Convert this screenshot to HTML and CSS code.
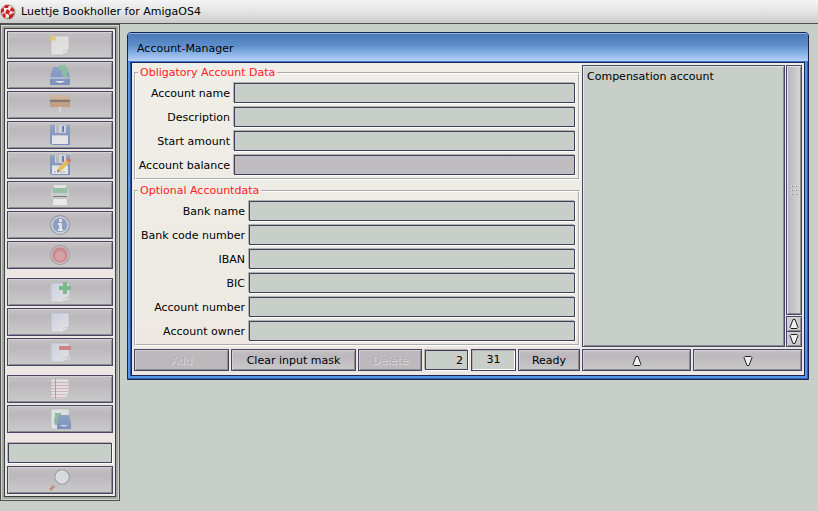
FILE: index.html
```html
<!DOCTYPE html>
<html lang="en">
<head>
    <meta charset="UTF-8">
    <meta name="viewport" content="width=device-width, initial-scale=1.0">
    <title>Luettje Bookholler for AmigaOS4</title>
    <link rel="stylesheet" href="styles.css">
</head>
<body>
    <!-- shared gradients and shapes for the toolbar icons -->
    <svg class="defs" aria-hidden="true">
        <defs>
            <linearGradient id="blue" x1="0" y1="0" x2="0" y2="1">
                <stop offset="0" stop-color="#7c98c8"/>
                <stop offset="1" stop-color="#5f7ab8"/>
            </linearGradient>
            <linearGradient id="paper" x1="0" y1="0" x2="1" y2="1">
                <stop offset="0" stop-color="#d2daec"/>
                <stop offset="1" stop-color="#f0f0f4"/>
            </linearGradient>
            <symbol id="sheet" viewBox="0 0 22 22">
                <path d="M2 2h18v14l-5 5H2z" fill="url(#paper)" stroke="#b4b4be" stroke-width=".7"/>
                <path d="M15 21v-4l5-1z" fill="#fff" stroke="#a8a8b0" stroke-width=".6"/>
            </symbol>
            <symbol id="floppy" viewBox="0 0 22 22">
                <path d="M1 1h20v20H3l-2-2z" fill="url(#blue)"/>
                <path d="M6 1h11v8H6z" fill="#dadde2"/>
                <path d="M13 2h2v6h-2z" fill="#4867a5"/>
                <path d="M7 1h3v8H7z" fill="#b9bdc4"/>
                <path d="M3 11h16v9H3z" fill="#f4f4f4"/>
                <path d="M3 11h16v1H3z" fill="#c8ccd4"/>
            </symbol>
        </defs>
    </svg>

    <header class="screen-bar">
        <svg class="ball" viewBox="0 0 16 16" aria-hidden="true">
            <circle cx="8" cy="8" r="7" fill="#f6eeee" stroke="#a08080"/>
            <path d="M5 1l4 0-1 3-4 0zM11 3l3 2 0 3-4-1zM1 5l3-1 0 4-3 1zM7 5l3 2-1 4-4-2zM2 10l3-1 1 4-2 1zM9 11l4-2 1 1-2 4-3 1z" fill="#cc2222"/>
            <path d="M14 8a6 6 0 0 1-7 6" fill="none" stroke="#701818" stroke-opacity=".5"/>
        </svg>
        <h1>Luettje Bookholler for AmigaOS4</h1>
    </header>

    <div class="desktop">
        <nav class="toolbar" aria-label="Tools">
            <div class="group">
                <button type="button" class="tool" aria-label="New">
                    <svg viewBox="0 0 22 22">
                        <path d="M2 2h18v14l-5 5H2z" fill="#eeeeec" stroke="#b8b8b8" stroke-width=".7"/>
                        <path d="M15 21v-4l5-1z" fill="#fff" stroke="#a8a8a8" stroke-width=".6"/>
                        <path d="M3 0l1 3 4-1-2 2 2 3-4-1-2 3-1-4-1-1 2-1-1-2 2 1z" fill="#f0cf60"/>
                    </svg>
                </button>
                <button type="button" class="tool" aria-label="Open">
                    <svg viewBox="0 0 22 22">
                        <path d="M4 3h14l3 10v8H1v-8z" fill="url(#blue)"/>
                        <path d="M1 13h20v2H1z" fill="#a4b6dc"/>
                        <path d="M6 17q5 4 10 0z" fill="#eef2f8"/>
                        <path d="M10 1h6l3 4-1 5 1 4-4-1-3-4q3-2-2-3z" fill="#79bf93"/>
                    </svg>
                </button>
                <button type="button" class="tool" aria-label="Drawer">
                    <svg viewBox="0 0 22 22">
                        <path d="M2 1h18l1 7v5H1V8z" fill="#c49470"/>
                        <path d="M2 1h18v4H2z" fill="#d2b090"/>
                        <path d="M1 6h20v2H1z" fill="#705e54"/>
                        <path d="M9 13h4l-2 2z" fill="#f1e3d8"/>
                        <path d="M11 14v4" stroke="#dcdcdc" stroke-width="2"/>
                    </svg>
                </button>
                <button type="button" class="tool" aria-label="Save">
                    <svg viewBox="0 0 22 22"><use href="#floppy"/></svg>
                </button>
                <button type="button" class="tool" aria-label="Save as">
                    <svg viewBox="0 0 22 22">
                        <use href="#floppy"/>
                        <path d="M5 18h12" stroke="#8a8a8a" stroke-dasharray="2 1"/>
                        <path d="M8 18l2-5 8-8 3 3-8 8z" fill="#f4bc38"/>
                        <path d="M17 6l2-2q3 0 3 3l-2 2z" fill="#cf6458"/>
                        <path d="M8 18l1-3 2 2z" fill="#6a5040"/>
                    </svg>
                </button>
                <button type="button" class="tool" aria-label="Print">
                    <svg viewBox="0 0 22 22">
                        <path d="M5 1h12v4H5z" fill="#f2f2f2"/>
                        <path d="M2 6l3-2h12l3 2v8H2z" fill="#cfd2d2"/>
                        <path d="M4 4h14v5H4z" fill="#84c49c"/>
                        <path d="M4 12h14v1H4z" fill="#555"/>
                        <path d="M1 15h20v3H1z" fill="#bfc1c1"/>
                        <path d="M4 15h14v6H4z" fill="#fafafa"/>
                    </svg>
                </button>
                <button type="button" class="tool" aria-label="Info">
                    <svg viewBox="0 0 22 22">
                        <circle cx="11" cy="11" r="9" fill="#7892c6" stroke="#868ba0" stroke-width="2"/>
                        <circle cx="11" cy="11" r="8" fill="none" stroke="#dadfe9" stroke-width="1.4"/>
                        <path d="M10 5h3v3h-3zM9 9h4v6h1v2H9v-2h1v-4H9z" fill="#f2f2f6"/>
                    </svg>
                </button>
                <button type="button" class="tool" aria-label="Quit">
                    <svg viewBox="0 0 22 22">
                        <circle cx="11" cy="11" r="9" fill="#d0747c" stroke="#94898c" stroke-width="2"/>
                        <circle cx="11" cy="11" r="8.4" fill="none" stroke="#e4d6d6"/>
                        <circle cx="11" cy="12" r="5" fill="#dd969a"/>
                    </svg>
                </button>
            </div>

            <div class="group">
                <button type="button" class="tool" aria-label="Add entry">
                    <svg viewBox="0 0 22 22">
                        <path d="M1 5l1 15 5 1 14-2V8z" fill="#dcdce2"/>
                        <use href="#sheet"/>
                        <path d="M14 1h4v4h4v4h-4v4h-4V9h-4V5h4z" fill="#5db878"/>
                    </svg>
                </button>
                <button type="button" class="tool" aria-label="Edit entry">
                    <svg viewBox="0 0 22 22"><use href="#sheet"/></svg>
                </button>
                <button type="button" class="tool" aria-label="Remove entry">
                    <svg viewBox="0 0 22 22">
                        <path d="M1 5l1 15 5 1 14-2V8z" fill="#dcdce2"/>
                        <use href="#sheet"/>
                        <path d="M10 5h12v4H10z" fill="#d07070"/>
                    </svg>
                </button>
            </div>

            <div class="group">
                <button type="button" class="tool" aria-label="Journal">
                    <svg viewBox="0 0 22 22">
                        <path d="M2 1h18v15l-5 5H2z" fill="#f1eeee" stroke="#b8b8b8" stroke-width=".7"/>
                        <path d="M2 4.500h18M2 7.500h18M2 10.500h18M2 13.500h18M2 16.500h13M2 19.500h12" stroke="#dcb0b4"/>
                        <path d="M6.500 1v20" stroke="#9a90b8"/>
                        <path d="M15 21v-4l5-1z" fill="#fff" stroke="#a8a8a8" stroke-width=".6"/>
                    </svg>
                </button>
                <button type="button" class="tool" aria-label="Export">
                    <svg viewBox="0 0 22 22">
                        <path d="M2 1h18v20H2z" fill="#eeeef0" stroke="#b8b8b8" stroke-width=".7"/>
                        <path d="M6 5h6v6l-2-1q-2 3 0 7H6q-2-5 0-8z" fill="#74bd8c"/>
                        <path d="M10 7h10l2 8v6H8v-6z" fill="url(#blue)"/>
                        <path d="M11 17q4 3 8 0z" fill="#d8e2f4"/>
                    </svg>
                </button>
            </div>

            <div class="group search">
                <input type="text" class="field" aria-label="Search text">
                <button type="button" class="tool" aria-label="Search">
                    <svg viewBox="0 0 22 22">
                        <path d="M1 21l5-5" stroke="#c07858" stroke-width="3"/>
                        <path d="M5 17l3-3" stroke="#ccc" stroke-width="2"/>
                        <circle cx="13" cy="8" r="7" fill="#e3e8e8" stroke="#929696" stroke-width="1.500"/>
                        <circle cx="13" cy="8" r="6" fill="none" stroke="#fafafa"/>
                    </svg>
                </button>
            </div>
        </nav>

        <main class="workspace">
            <section class="window" aria-labelledby="window-title">
                <h2 class="window-title" id="window-title">Account-Manager</h2>
                <div class="client">
                    <form class="account-form">
                        <fieldset class="obligatory">
                            <legend>Obligatory Account Data</legend>
                            <label for="name">Account name</label>
                            <input type="text" class="field" id="name">
                            <label for="description">Description</label>
                            <input type="text" class="field" id="description">
                            <label for="start">Start amount</label>
                            <input type="text" class="field" id="start">
                            <label for="balance">Account balance</label>
                            <input type="text" class="field" id="balance" readonly>
                        </fieldset>
                        <fieldset class="optional">
                            <legend>Optional Accountdata</legend>
                            <label for="bank">Bank name</label>
                            <input type="text" class="field" id="bank">
                            <label for="bank-code">Bank code number</label>
                            <input type="text" class="field" id="bank-code">
                            <label for="iban">IBAN</label>
                            <input type="text" class="field" id="iban">
                            <label for="bic">BIC</label>
                            <input type="text" class="field" id="bic">
                            <label for="number">Account number</label>
                            <input type="text" class="field" id="number">
                            <label for="owner">Account owner</label>
                            <input type="text" class="field" id="owner">
                        </fieldset>
                    </form>

                    <div class="accounts">
                        <ul class="account-list">
                            <li>Compensation account</li>
                        </ul>
                        <div class="scroller">
                            <div class="knob">
                                <svg viewBox="0 0 6 10" aria-hidden="true">
                                    <path d="M1 1h1v1H1zM5 1h1v1H5zM1 5h1v1H1zM5 5h1v1H5zM1 9h1v1H1zM5 9h1v1H5z" fill="#888"/>
                                    <path d="M0 0h1v1H0zM4 0h1v1H4zM0 4h1v1H0zM4 4h1v1H4zM0 8h1v1H0zM4 8h1v1H4z" fill="#eee"/>
                                </svg>
                            </div>
                            <button type="button" class="arrow" aria-label="Scroll up">
                                <svg viewBox="0 0 12 12"><path d="M5 1.500h2l3 8-1 1H3l-1-1z"/></svg>
                            </button>
                            <button type="button" class="arrow" aria-label="Scroll down">
                                <svg viewBox="0 0 12 12"><path d="M3 1.500h6l1 1-3 8H5l-3-8z"/></svg>
                            </button>
                        </div>
                    </div>

                    <div class="actions">
                        <button type="button" class="btn add" disabled>Add</button>
                        <button type="button" class="btn clear">Clear input mask</button>
                        <button type="button" class="btn delete" disabled>Delete</button>
                        <input type="text" class="field position" value="2" aria-label="Position">
                        <output class="total">31</output>
                        <button type="button" class="btn ready">Ready</button>
                    </div>

                    <div class="move">
                        <button type="button" class="btn" aria-label="Move up">
                            <svg viewBox="0 0 12 12"><path d="M5 1.500h2l3 8-1 1H3l-1-1z"/></svg>
                        </button>
                        <button type="button" class="btn" aria-label="Move down">
                            <svg viewBox="0 0 12 12"><path d="M3 1.500h6l1 1-3 8H5l-3-8z"/></svg>
                        </button>
                    </div>
                </div>
            </section>
        </main>
    </div>
</body>
</html>
```

FILE: styles.css
```css
* {
    box-sizing: border-box;
}
body {
    margin: 0;
    background: #c8cfc8;
    color: #000;
    font-family: "DejaVu Sans", Verdana, sans-serif;
    font-size: 11px;
    line-height: 14px;
}
button,
input {
    font: inherit;
    color: inherit;
    margin: 0;
    border-radius: 0;
}
h1,
h2 {
    margin: 0;
    font-size: 11px;
    font-weight: normal;
}
svg {
    display: block;
}
.defs {
    width: 0;
    height: 0;
}

/* screen title */
.screen-bar {
    display: flex;
    align-items: center;
    gap: 5px;
    height: 24px;
    padding-top: 1px;
    border-bottom: 1px solid #505050;
    background: linear-gradient(#f4f4f4, #e4e4e4 50%, #cccccc);
}
.ball {
    width: 16px;
    height: 16px;
}
.desktop {
    display: flex;
    align-items: flex-start;
}

/* toolbar */
.toolbar {
    flex: none;
    display: flex;
    flex-direction: column;
    gap: 9px;
    width: 120px;
    padding: 6px;
    border: 1px solid #4c504c;
    background: #eee6e4;
    box-shadow: inset 0 0 0 1px #d4d6d4, inset 0 0 0 3px #a4a6a4, inset 0 0 0 4px #3c403c;
}
.group {
    display: flex;
    flex-direction: column;
    gap: 2px;
}
.search {
    gap: 3px;
    padding-top: 1px;
}
.search .field {
    width: auto;
    margin: 0 1px;
}
.tool,
.btn,
.arrow {
    display: flex;
    align-items: center;
    justify-content: center;
    padding: 0;
    border: 1px solid #464664;
    background: linear-gradient(#c4c2c4, #bbb8bc 30%, #c0bec1 55%, #cacaca);
    box-shadow: inset 1px 1px 0 #d2d0d2, inset -1px -1px 0 #8c8c90;
}
.tool {
    height: 28px;
}
.tool svg {
    width: 22px;
    height: 22px;
    opacity: .7;
}

/* input fields */
.field {
    width: 100%;
    min-width: 0;
    height: 20px;
    padding: 0 4px;
    border: 1px solid #40405e;
    background: #c8cfc8;
    box-shadow: 1px 1px 0 #fff, -1px -1px 0 #b4b0b0;
}
.field[readonly] {
    background: #bfbdbf;
}

/* window */
.workspace {
    flex: 1;
    min-width: 0;
    padding: 8px 9px 8px 7px;
}
.window {
    border: 1px solid #18244e;
    border-radius: 4px 4px 0 0;
    background: #5596e8;
    box-shadow: inset -1px -1px 0 #2c60b4;
}
.window-title {
    height: 29px;
    padding: 8px 9px;
    border-top: 1px solid #8db5e4;
    border-bottom: 1px solid #3a7cd4;
    border-radius: 3px 3px 0 0;
    background: linear-gradient(#4c79b8, #5c8cca 40%, #84b0e4 70%, #b8d0f4);
}
.client {
    display: grid;
    grid-template-columns: minmax(0, 1fr) 220px;
    gap: 2px;
    margin: 0 3px 3px;
    padding: 2px 2px 4px;
    border: 1px solid #18244e;
    background: linear-gradient(#f0eee8, #edeae4 75%, #eee6e4);
    box-shadow: -1px 0 0 #2450a0;
}

/* account form */
.account-form {
    display: flex;
    flex-direction: column;
    gap: 4px;
    padding: 1px 0;
}
fieldset {
    display: grid;
    align-items: center;
    gap: 4px;
    min-width: 0;
    margin: 0;
    padding: 3px 3px 3px 2px;
    border: 2px groove #fff;
}
.obligatory {
    grid-template-columns: 92px 1fr;
}
.optional {
    grid-template-columns: 107px 1fr;
}
legend {
    padding: 0 2px;
    color: #ff2020;
}
fieldset label {
    padding-top: 2px;
    text-align: right;
    white-space: nowrap;
}

/* account list */
.accounts {
    display: flex;
    gap: 1px;
}
.account-list {
    flex: 1;
    margin: 0;
    padding: 4px;
    border: 1px solid #464664;
    background: #c8cfc8;
    box-shadow: inset 1px 1px 0 #e4e8e4, inset -1px -1px 0 #8c908c;
    list-style: none;
}
.scroller {
    display: flex;
    flex-direction: column;
    width: 16px;
}
.knob {
    flex: 1;
    display: flex;
    align-items: center;
    justify-content: center;
    margin-bottom: 1px;
    border: 1px solid #464664;
    background: linear-gradient(90deg, #b8b6ba, #d6d6d6);
    box-shadow: inset 1px 1px 0 #e4e4e4, inset -1px -1px 0 #8c8c90;
}
.knob svg {
    width: 6px;
    height: 10px;
}
.arrow {
    height: 16px;
    background: #cccccc;
}
.arrow + .arrow {
    height: 15px;
    border-top: 0;
}
.arrow svg,
.btn svg {
    width: 12px;
    height: 12px;
    fill: #eeeeee;
    stroke: #222;
}

/* bottom row */
.actions {
    display: flex;
    align-items: center;
    gap: 2px;
}
.move {
    display: flex;
    gap: 2px;
}
.btn {
    height: 22px;
    padding-top: 1px;
    white-space: nowrap;
}
.btn:disabled {
    color: #b0aaae;
    text-shadow: 1px 1px 0 #e0dade;
    background: #bcb9bc;
}
.add,
.move .btn {
    flex: 1;
}
.clear {
    width: 125px;
}
.delete {
    width: 64px;
}
.ready {
    width: 62px;
}
.field.position {
    width: 43px;
    margin: 0 1px;
    text-align: right;
}
.total {
    width: 45px;
    height: 22px;
    padding: 3px;
    border: 1px solid #40405e;
    background: #c8cfc8;
    box-shadow: inset 1px 1px 0 #b0b0b0, inset -1px -1px 0 #fff;
    text-align: center;
}
```
